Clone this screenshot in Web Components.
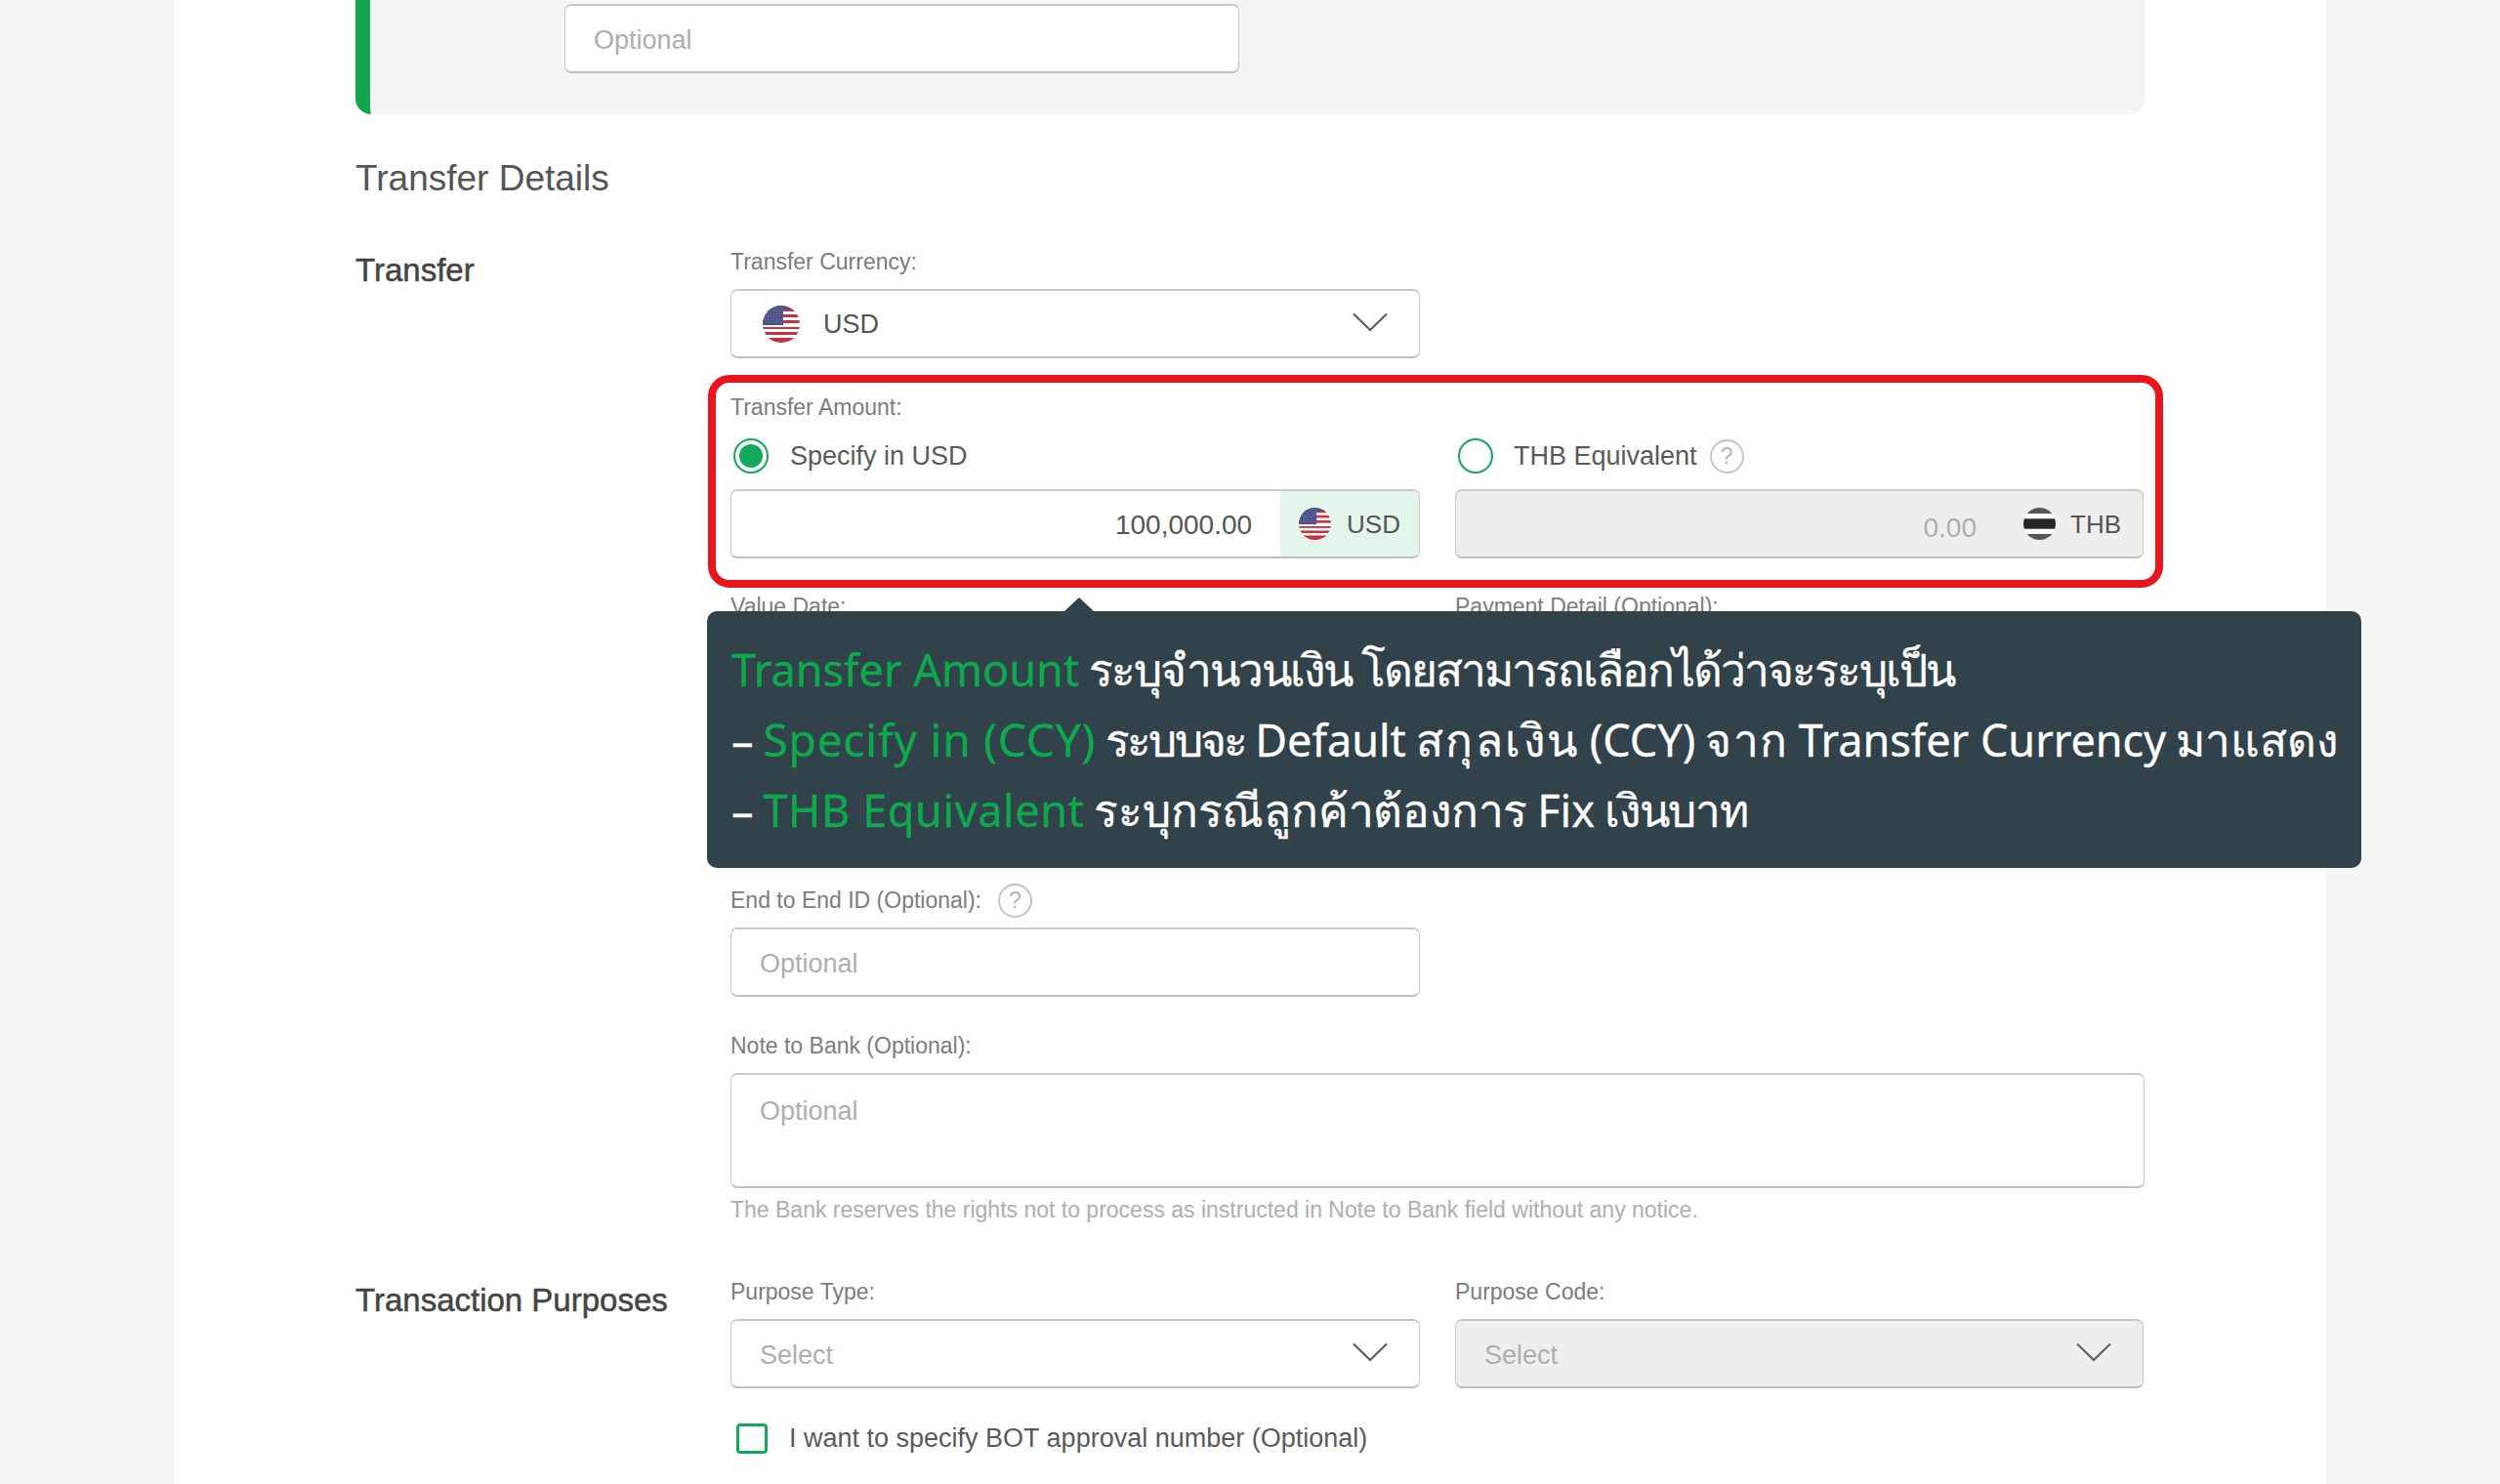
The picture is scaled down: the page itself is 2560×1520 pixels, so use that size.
<!DOCTYPE html>
<html lang="en">
<head>
<meta charset="utf-8">
<title>Transfer Details</title>
<style>
  html, body { margin: 0; padding: 0; background: #f5f5f5; }
  body { font-family: "Liberation Sans", Arial, sans-serif; color: #5a5a5a; }
</style>
</head>
<body>

<bank-page>
  <note-panel><text-box width="691" muted placeholder="Optional"></text-box></note-panel>
  <section-title>Transfer Details</section-title>

  <form-section heading="Transfer">
    <form-field label="Transfer Currency:" half>
      <select-box><flag-icon code="us" size="38" style="margin-left:3px"></flag-icon><span style="margin-left:24px">USD</span></select-box>
    </form-field>

    <amount-group style="margin-top:36px">
      <form-label>Transfer Amount:</form-label>
      <two-cols style="margin-top:18px">
        <radio-option checked>Specify in USD</radio-option>
        <radio-option><span style="margin-left:-1px">THB Equivalent</span> <help-icon style="margin-left:13px"></help-icon></radio-option>
      </two-cols>
      <two-cols style="margin-top:16px">
        <amount-box value="100,000.00" code="us" unit="USD" tint></amount-box>
        <amount-box value="0.00" code="th" unit="THB" disabled></amount-box>
      </two-cols>
    </amount-group>

    <two-cols style="margin-top:35px;height:301px">
      <form-field label="Value Date:"><text-box></text-box></form-field>
      <form-field label="Payment Detail (Optional):"><text-box></text-box></form-field>
    </two-cols>

    <form-field label="End to End ID (Optional):" half help>
      <text-box muted placeholder="Optional"></text-box>
    </form-field>

    <form-field label="Note to Bank (Optional):" style="margin-top:36px">
      <text-box muted tall placeholder="Optional"></text-box>
    </form-field>
    <help-text>The Bank reserves the rights not to process as instructed in Note to Bank field without any notice.</help-text>
  </form-section>

  <form-section heading="Transaction Purposes" style="margin-top:56px">
    <two-cols>
      <form-field label="Purpose Type:"><select-box muted>Select</select-box></form-field>
      <form-field label="Purpose Code:"><select-box muted disabled>Select</select-box></form-field>
    </two-cols>
    <check-option style="margin-top:33px">I want to specify BOT approval number (Optional)</check-option>
  </form-section>

  <tip-box slot="over" lang="th">
    <div><b>Transfer Amount</b> ระบุจำนวนเงิน โดยสามารถเลือกได้ว่าจะระบุเป็น</div>
    <div><i>–</i> <b style="letter-spacing:.8px;font-size:46px">Specify in (CCY)</b> <u style="letter-spacing:-2.8px">ระบบจะ</u> <i>Default</i> <u style="letter-spacing:2.5px">สกุลเงิน</u> <i>(CCY)</i> <u style="letter-spacing:1.5px">จาก</u> <i>Transfer Currency</i> <u style="letter-spacing:0">มาแสดง</u></div>
    <div><i>–</i> <b style="letter-spacing:.6px">THB Equivalent</b> <u style="letter-spacing:-.2px">ระบุกรณีลูกค้าต้องการ</u> <i>Fix</i> <u style="letter-spacing:-1.2px">เงินบาท</u></div>
  </tip-box>
</bank-page>

<script>
// small helper so every element below only has to say what goes in its shadow
class BaseEl extends HTMLElement {
  connectedCallback() {
    if (this.shadowRoot) return
    this.attachShadow({ mode: 'open' })
    const template = document.createElement('template')
    template.innerHTML = `<style>${this.css}</style>${this.html}`
    this.shadowRoot.appendChild(template.content.cloneNode(true))
  }
  get css() { return '' }
  get html() { return '<slot></slot>' }
}

const CHEVRON = `<svg width="36" height="20" viewBox="0 0 36 20" fill="none"><path d="M1 1.5 L18 18 L35 1.5" stroke="#5a5a5a" stroke-width="2"/></svg>`
const BOX_BORDER = `border: 2px solid #c9c9c9; border-left-width: 1.5px; border-right-width: 1.5px; border-bottom-color: #c0c0c0; border-radius: 7px;`

class BankPage extends BaseEl {
  get css() { return `
    :host { display: block; height: 1520px; overflow: hidden; background: #f5f5f5; }
    main { position: relative; box-sizing: border-box; height: 1520px; margin: 0 178px; padding: 0 186px; background: #fff; }
  `}
  get html() { return `<main><slot></slot><slot name="over"></slot></main>` }
}

class NotePanel extends BaseEl {
  get css() { return `
    :host { display: block; box-sizing: border-box; height: 117px; padding: 4px 0 0 199px; background: #f5f5f5;
            border-left: 15px solid #12a650; border-radius: 0 0 16px 16px; }
  `}
}

class SectionTitle extends BaseEl {
  get css() { return `
    :host { display: block; margin: 43px 0 48px; font-size: 37px; line-height: 46px; color: #555; }
  `}
}

class FormSection extends BaseEl {
  get css() { return `
    :host { display: grid; grid-template-columns: 384px 1fr; }
    h3 { margin: 0; padding-top: 3px; font-size: 33px; line-height: 40px; font-weight: normal; color: #444; -webkit-text-stroke: 0.5px #444; }
    .body { min-width: 0; }
  `}
  get html() { return `<h3>${this.getAttribute('heading')}</h3><div class="body"><slot></slot></div>` }
}

class FormLabel extends BaseEl {
  get css() { return `
    :host { display: flex; align-items: center; height: 28px; font-size: 23px; color: #7c7c7c; white-space: nowrap; }
  `}
}

class FormField extends BaseEl {
  get css() { return `
    :host { display: block; }
    :host([half]) { width: 706px; }
    .box { margin-top: 14px; }
  `}
  get html() { return `
    <form-label>${this.getAttribute('label')}${this.hasAttribute('help') ? '<help-icon style="margin-left:17px"></help-icon>' : ''}</form-label>
    <div class="box"><slot></slot></div>`
  }
}

class TwoCols extends BaseEl {
  get css() { return `:host { display: grid; grid-template-columns: 706px 705px; column-gap: 36px; }` }
}

class TextBox extends BaseEl {
  get css() { return `
    :host { display: block; box-sizing: border-box; height: 71px; padding: 0 29px; background: #fff; ${BOX_BORDER}
            font-size: 27px; line-height: 71px; color: #555; }
    :host([muted]) { color: #aeaeae; }
    :host([tall]) { height: 118px; line-height: 75px; }
  `}
  connectedCallback() {
    super.connectedCallback()
    const w = this.getAttribute('width')
    if (w) this.style.width = w + 'px'
  }
  get html() { return `<span>${this.getAttribute('placeholder') || ''}</span>` }
}

class SelectBox extends BaseEl {
  get css() { return `
    :host { display: flex; align-items: center; justify-content: space-between; box-sizing: border-box; height: 71px; padding: 0 32px 0 29px;
            background: #fff; ${BOX_BORDER} font-size: 27px; color: #555; }
    :host([muted]) { color: #aeaeae; }
    :host([muted]) .val { padding-top: 3px; }
    :host([disabled]) { background: #eeeeee; }
    .val { display: flex; align-items: center; padding-top: 1px; }
    svg { display: block; margin-top: -3px; }
  `}
  get html() { return `<div class="val"><slot></slot></div>${CHEVRON}` }
}

class AmountGroup extends BaseEl {
  get css() { return `
    :host { display: block; position: relative; }
    .mark { position: absolute; top: -19px; left: -23px; right: -19px; bottom: -30px; border: 8px solid #e8161c; border-radius: 22px; pointer-events: none; }
  `}
  get html() { return `<slot></slot><div class="mark"></div>` }
}

class AmountBox extends BaseEl {
  get css() { return `
    :host { display: flex; box-sizing: border-box; height: 71px; background: #fff; ${BOX_BORDER} font-size: 26px; color: #555; overflow: hidden; }
    :host([disabled]) { background: #eeeeee; }
    :host([disabled]) .val { color: #aeaeae; padding-right: 48px; padding-top: 8px; }
    .val { flex: 1; display: flex; align-items: center; justify-content: flex-end; padding-right: 29px; padding-top: 2px; font-size: 28px; }
    .unit { display: flex; align-items: center; gap: 16px; padding: 0 19px 0 19px; }
    .unit span { padding-top: 2px; }
    :host([tint]) .unit { background: #e4f5ec; }
    :host([disabled]) .unit { gap: 15px; padding-left: 0; padding-right: 22px; }
  `}
  get html() { return `
    <div class="val">${this.getAttribute('value')}</div>
    <div class="unit"><flag-icon code="${this.getAttribute('code')}" size="33"></flag-icon><span>${this.getAttribute('unit')}</span></div>`
  }
}

class RadioOption extends BaseEl {
  get css() { return `
    :host { display: flex; align-items: center; height: 36px; padding-left: 3px; font-size: 27px; color: #5a5a5a; }
    .ring { box-sizing: border-box; width: 36px; height: 36px; margin-right: 22px; border: 2px solid #14a85a; border-radius: 50%; background: #fff; padding: 4px; }
    .dot { width: 24px; height: 24px; border-radius: 50%; }
    :host([checked]) .dot { background: #14a85a; }
    .label { display: flex; align-items: center; }
  `}
  get html() { return `<div class="ring"><div class="dot"></div></div><div class="label"><slot></slot></div>` }
}

class CheckOption extends BaseEl {
  get css() { return `
    :host { display: flex; align-items: center; height: 36px; padding-left: 6px; font-size: 27px; color: #5a5a5a; }
    .box { box-sizing: border-box; width: 32px; height: 31px; margin-right: 22px; border: 3px solid #14a85a; border-radius: 4px; background: #fff; }
  `}
  get html() { return `<div class="box"></div><slot></slot>` }
}

class HelpIcon extends BaseEl {
  get css() { return `
    :host { display: inline-flex; align-items: center; justify-content: center; box-sizing: border-box; width: 35px; height: 35px;
            border: 2px solid #c4c4c4; border-radius: 50%; font-size: 23px; color: #b5b5b5; }
  `}
  get html() { return `?` }
}

class HelpText extends BaseEl {
  get css() { return `
    :host { display: block; margin-top: 8px; font-size: 23px; line-height: 28px; color: #aeaeae; white-space: nowrap; }
  `}
}

class FlagIcon extends BaseEl {
  get css() { return `:host { display: inline-block; line-height: 0; } svg { display: block; }` }
  get html() {
    const s = this.getAttribute('size')
    let stars = ''
    for (let y = 2; y < 20; y += 3) for (let x = 2; x < 22; x += 3)
      stars += `<circle cx="${x + (y % 2)}" cy="${y}" r=".6" fill="#9a9dc0"/>`
    const us = `
      <rect width="38" height="38" fill="#fff"/>
      ${[3, 9, 15, 21, 27, 33].map(y => `<rect y="${y}" width="38" height="3" fill="#c8313f"/>`).join('')}
      <rect y="0" width="21" height="20" fill="#4a4f86"/>
      <rect y="0" width="38" height="4" fill="#4a4f86"/>
      ${stars}
      <path d="M0 20 H38 V22 H0Z" fill="#fff"/>
      <rect y="33" width="38" height="5" fill="#c8313f"/>`
    const th = `
      <rect width="38" height="38" fill="#fff"/>
      <rect width="38" height="7" fill="#555"/>
      <rect y="13" width="38" height="12" fill="#262626"/>
      <rect y="31" width="38" height="7" fill="#555"/>`
    return `<svg width="${s}" height="${s}" viewBox="0 0 38 38">
      <clipPath id="c"><circle cx="19" cy="19" r="19"/></clipPath>
      <g clip-path="url(#c)">${this.getAttribute('code') === 'us' ? us : th}</g></svg>`
  }
}

class TipBox extends BaseEl {
  get css() { return `
    :host { display: block; position: absolute; left: 546px; top: 626px; box-sizing: border-box; width: 1694px; height: 263px;
            padding: 23px 0 0 25px; background: #31424a; border-radius: 10px;
            font-family: "Noto Sans", sans-serif; font-size: 46px; letter-spacing: -2px; line-height: 72px; color: #fff; white-space: nowrap; -webkit-text-stroke: 0.3px currentColor; }
    :host::before { content: ""; position: absolute; left: 366px; top: -14px; border-left: 15px solid transparent; border-right: 15px solid transparent; border-bottom: 14px solid #31424a; }
    ::slotted(div) { height: 72px; }
  `}
}

customElements.define('bank-page', BankPage)
customElements.define('note-panel', NotePanel)
customElements.define('section-title', SectionTitle)
customElements.define('form-section', FormSection)
customElements.define('form-label', FormLabel)
customElements.define('form-field', FormField)
customElements.define('two-cols', TwoCols)
customElements.define('text-box', TextBox)
customElements.define('select-box', SelectBox)
customElements.define('amount-group', AmountGroup)
customElements.define('amount-box', AmountBox)
customElements.define('radio-option', RadioOption)
customElements.define('check-option', CheckOption)
customElements.define('help-icon', HelpIcon)
customElements.define('help-text', HelpText)
customElements.define('flag-icon', FlagIcon)
customElements.define('tip-box', TipBox)
</script>
<style>
  tip-box b { font-weight: normal; font-size: 45px; letter-spacing: 0; color: #0ea84f; }
  tip-box i { font-style: normal; font-size: 45px; letter-spacing: 0; }
  tip-box u { text-decoration: none; }
</style>
</body>
</html>
